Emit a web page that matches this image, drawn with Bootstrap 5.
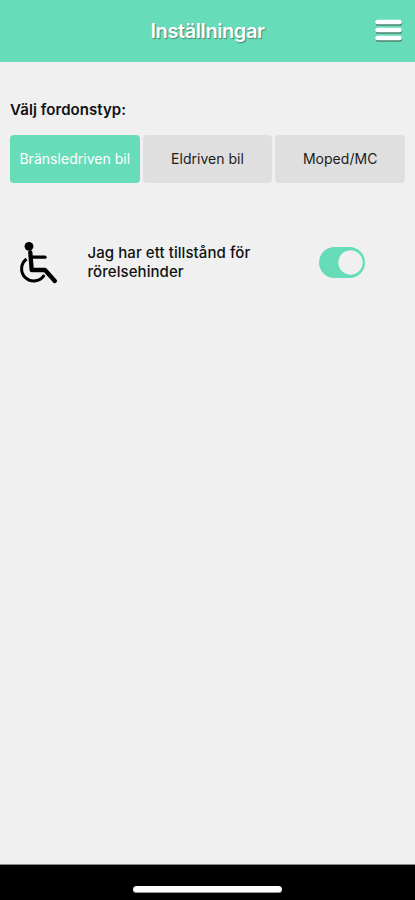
<!DOCTYPE html>
<html lang="sv">
<head>
<meta charset="utf-8">
<meta name="viewport" content="width=device-width, initial-scale=1">
<title>Inställningar</title>
<link href="https://cdn.jsdelivr.net/npm/bootstrap@5.3.0/dist/css/bootstrap.min.css" rel="stylesheet">
<style>
body{background:#f0f0f0;color:#111;font-family:Inter,Roboto,sans-serif;height:900px;overflow:hidden}
.app-head{background:#66dcb8;height:62px;display:grid;grid-template-columns:50px 1fr 50px}
.app-title{grid-column:2;font-size:20px;line-height:24px;font-weight:600;letter-spacing:-.42px;color:#fff;text-shadow:1px 1px 1px #4a8573}
.menu-btn{width:32px;height:26px;margin-left:7px}
.app-main{padding:37px 10px 0}
.field-title{font-size:15px;line-height:22px;font-weight:600;letter-spacing:.05px;margin-bottom:14px}
.choices{display:grid;grid-template-columns:repeat(3,1fr);gap:3px}
.choice{--bs-btn-bg:#dfdfdf;--bs-btn-color:#1c1c1c;--bs-btn-active-bg:#66dcb8;--bs-btn-active-color:#fff;height:48px;padding-bottom:8px;font-size:14px;letter-spacing:.03px;border:0;border-radius:4px}
.permit{margin-top:56px;height:46px}
.permit-icon{width:42px;height:46px;margin-left:6px}
.permit-text{font-size:15px;line-height:19px;font-weight:500;letter-spacing:.07px;width:261px;padding:0 60px 0 29.5px}
.permit-switch .form-check-input{width:46px;height:31px;margin:0;border:0;box-shadow:none;background-color:#66dcb8;border-radius:16px;background-size:29px 29px;background-position:right 0 center;background-image:radial-gradient(circle,#f0f0f0 0 11.8px,transparent 12.5px);background-repeat:no-repeat;padding:0;float:none}
.home-area{height:36px;background:#000;border-top:1px solid #898989}
.home-line{width:149px;height:7px;background:#fff;margin-bottom:7px;border-bottom:1px solid #999}
</style>
</head>
<body class="d-flex flex-column">
<header class="app-head align-items-center flex-shrink-0">
<h1 class="app-title m-0 text-center">Inställningar</h1>
<button class="btn p-0 border-0 menu-btn d-flex" type="button" aria-label="Meny">
<svg width="32" height="26" viewBox="0 0 32 26"><g stroke-linecap="round" stroke-width="4.6"><path d="M5.5 4H27.5M5.5 12H27.5M5.5 20H27.5" transform="translate(.4 1.4)" stroke="#51836f"/><path d="M5.5 4H27.5M5.5 12H27.5M5.5 20H27.5" stroke="#fff"/></g></svg>
</button>
</header>
<main class="app-main flex-grow-1">
<h2 class="field-title">Välj fordonstyp:</h2>
<div class="choices" role="group">
<button type="button" class="btn choice active px-0">Bränsledriven bil</button>
<button type="button" class="btn choice px-0">Eldriven bil</button>
<button type="button" class="btn choice px-0">Moped/MC</button>
</div>
<div class="permit d-flex align-items-center">
<svg class="permit-icon flex-shrink-0" viewBox="16 239 42 46"><circle cx="29" cy="246.3" r="4.4"/><g fill="none" stroke="#000"><path d="M30.3 252.5L31.7 270H45L54.8 281" stroke-width="4.3" stroke-linejoin="round" stroke-linecap="round"/><path d="M31 257.2H45" stroke-width="3.2" stroke-linecap="round"/><path d="M26.5 259A12.2 12.2 0 1 0 44.3 275" stroke-width="3"/></g></svg>
<label class="permit-text" for="permit">Jag har ett tillstånd för rörelsehinder</label>
<div class="form-switch permit-switch d-flex p-0"><input class="form-check-input" type="checkbox" role="switch" id="permit" checked></div>
</div>
</main>
<footer class="home-area d-flex justify-content-center align-items-end flex-shrink-0"><div class="home-line rounded-pill"></div></footer>
<script src="https://cdn.jsdelivr.net/npm/bootstrap@5.3.0/dist/js/bootstrap.bundle.min.js"></script>
</body>
</html>
